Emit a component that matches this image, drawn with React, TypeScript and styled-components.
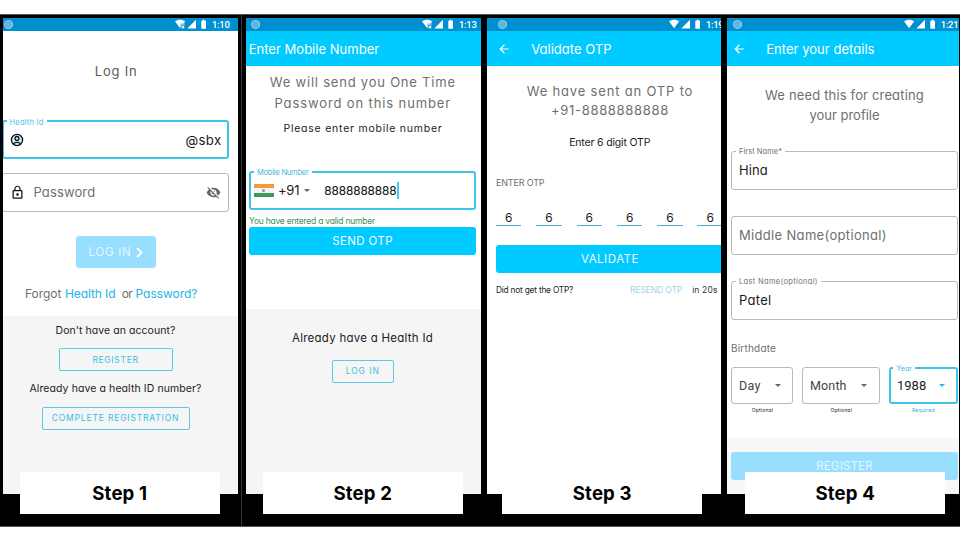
import React from 'react';
import styled, { createGlobalStyle, css } from 'styled-components';
import { MdArrowBack, MdLockOutline, MdVisibilityOff } from 'react-icons/md';

const CYAN = '#00caff';
const LINK = '#22b4e6';
const GREY = '#6f6f6f';
const INK = '#1c1c1c';

const GlobalStyle = createGlobalStyle`
  body { margin: 0; background: #fff; }
  * { box-sizing: border-box; }
`;

const Page = styled.div`
  width: 960px;
  height: 540px;
  padding-top: 14px;
  overflow: hidden;
  background: #fff;
  font-family: Inter, "Open Sans", sans-serif;
  font-feature-settings: "cv11";
`;

const Board = styled.main`
  height: 513px;
  padding-top: 3px;
  border-top: 1px solid #555;
  border-bottom: 1px solid #555;
  background: #000;
  display: grid;
  grid-template-columns: 238px 4px 239px 241px 238px;
`;

const Separator = styled.div`
  margin: -3px 0 0;
  border-right: 1px solid #3a3a3a;
`;

const Phone = styled.section<{ $left: number }>`
  padding-left: ${(p) => p.$left}px;
  min-width: 0;
`;

const Screen = styled.div<{ $width: number }>`
  width: ${(p) => p.$width}px;
  height: 476px;
  overflow: hidden;
  background: #fff;
  display: flex;
  flex-direction: column;
`;

const StepLabel = styled.div<{ $left: number }>`
  position: relative;
  margin: -22px 0 0 ${(p) => p.$left}px;
  width: 200.5px;
  height: 42px;
  padding-bottom: 1px;
  background: #fff;
  color: #000;
  font-size: 18.6px;
  font-weight: 700;
  letter-spacing: 0.15px;
  display: flex;
  align-items: center;
  justify-content: center;
`;

const StatusBar = styled.div<{ $dot: number }>`
  flex: none;
  height: 13px;
  padding-left: ${(p) => p.$dot}px;
  background: #008fcf;
  display: flex;
  align-items: center;
  overflow: hidden;
`;

const StatusDot = styled.span`
  flex: none;
  width: 9px;
  height: 9px;
  border-radius: 50%;
  background: #62b4dc;
  border: 1px solid #86c6e4;
  border-right-color: #b0d8ea;
`;

const StatusRight = styled.div<{ $gap: number }>`
  margin-left: ${(p) => p.$gap}px;
  flex: none;
  display: flex;
  align-items: center;
  gap: 4px;
  color: #fff;
  font: 500 9.5px/13px Roboto, sans-serif;
  letter-spacing: -0.3px;
`;

const AppBar = styled.header<{ $pad: number; $gap?: number }>`
  flex: none;
  height: 35px;
  padding-left: ${(p) => p.$pad}px;
  background: ${CYAN};
  color: #fff;
  display: flex;
  align-items: center;
  gap: ${(p) => p.$gap ?? 0}px;
`;

interface TextProps {
  $size: number;
  $ls?: number;
  $color?: string;
  $roboto?: boolean;
}

const Text = styled.span<TextProps>`
  font-size: ${(p) => p.$size}px;
  letter-spacing: ${(p) => p.$ls ?? 0}px;
  color: ${(p) => p.$color ?? 'inherit'};
  white-space: nowrap;
  ${(p) =>
    p.$roboto &&
    css`
      font-family: Roboto, sans-serif;
    `}
`;

const Line = styled.div<{ $h: number; $top?: number; $left?: number; $center?: number; $gap?: number }>`
  flex: none;
  height: ${(p) => p.$h}px;
  margin-top: ${(p) => p.$top ?? 0}px;
  padding-left: ${(p) => p.$left ?? 0}px;
  display: flex;
  align-items: center;
  gap: ${(p) => p.$gap ?? 0}px;
  ${(p) =>
    p.$center !== undefined &&
    css`
      width: ${p.$center * 2}px;
      justify-content: center;
    `}
`;

const Field = styled.div<{ $top: number; $left: number; $width: number; $height?: number; $active?: boolean }>`
  position: relative;
  flex: none;
  width: ${(p) => p.$width}px;
  height: ${(p) => p.$height ?? 39}px;
  margin: ${(p) => p.$top}px 0 0 ${(p) => p.$left}px;
  border: ${(p) => (p.$active ? '2px solid #3fc3ea' : '1px solid #b9b9b9')};
  border-radius: 3px;
  display: flex;
  align-items: center;
  padding: ${(p) => (p.$active ? '0 5.5px 0 6px' : '0 7px')};
  color: ${INK};
`;

const FieldLabel = styled.span<{ $ls: number; $color: string; $size?: number; $left?: number }>`
  position: absolute;
  top: -5.5px;
  left: ${(p) => p.$left ?? 4}px;
  padding: 0 3px;
  background: #fff;
  color: ${(p) => p.$color};
  font-size: ${(p) => p.$size ?? 7.5}px;
  line-height: 11px;
  letter-spacing: ${(p) => p.$ls}px;
  white-space: nowrap;
`;

const Push = styled.span<{ $right?: number }>`
  margin-left: auto;
  margin-right: ${(p) => p.$right ?? 0}px;
  display: flex;
  align-items: center;
`;

const Button = styled.button<{ $w: number; $h: number; $top: number; $left: number; $kind?: 'fill' | 'pale' | 'outline' }>`
  flex: none;
  width: ${(p) => p.$w}px;
  height: ${(p) => p.$h}px;
  margin: ${(p) => p.$top}px 0 0 ${(p) => p.$left}px;
  padding: 0;
  border-radius: 3px;
  font-family: inherit;
  font-feature-settings: inherit;
  display: flex;
  align-items: center;
  justify-content: center;
  gap: 4px;
  ${(p) =>
    p.$kind === 'outline'
      ? css`
          border: 1px solid #5bc8e6;
          border-radius: 2px;
          background: transparent;
          color: #35bfe4;
        `
      : css`
          border: 0;
          background: ${p.$kind === 'pale' ? '#97deff' : CYAN};
          color: ${p.$kind === 'pale' ? '#e4f6ff' : '#f2fcff'};
        `}
`;

const Panel = styled.div<{ $top: number; $tint?: string }>`
  flex: 1;
  margin-top: ${(p) => p.$top}px;
  background: ${(p) => p.$tint ?? '#f5f5f5'};
  display: flex;
  flex-direction: column;
  color: ${INK};
`;

const Caret = styled.span<{ $color?: string }>`
  border: 3px solid transparent;
  border-top-color: ${(p) => p.$color ?? '#666'};
  border-bottom: 0;
`;

const Flag = styled.span`
  width: 19.5px;
  height: 13px;
  margin-left: -3px;
  background: linear-gradient(#f2993f 0 4.3px, #f4f4f4 4.3px 8.7px, #3d9a5c 8.7px);
  display: flex;
  align-items: center;
  justify-content: center;
  &::after {
    content: '';
    width: 3px;
    height: 3px;
    border-radius: 50%;
    background: #8d9aa8;
  }
`;

const Cursor = styled.span`
  width: 2px;
  height: 17px;
  background: #4cc4ea;
`;

const Digits = styled.div`
  flex: none;
  margin: 18.5px 0 0 9.3px;
  display: grid;
  grid-template-columns: repeat(6, 25.5px);
  column-gap: 14.8px;
`;

const Digit = styled.div`
  height: 18px;
  border-bottom: 1px solid #55a9d6;
  display: flex;
  justify-content: center;
  color: ${INK};
  font-size: 12px;
  line-height: 19px;
`;

const Dates = styled.div`
  flex: none;
  display: flex;
  margin-top: 11px;
`;

const DateColumn = styled.div`
  display: flex;
  flex-direction: column;
`;

const Hint = styled.span<{ $left: number; $color?: string }>`
  margin: 2px 0 0 ${(p) => p.$left}px;
  font-size: 5px;
  line-height: 9px;
  letter-spacing: 0.2px;
  color: ${(p) => p.$color ?? '#222'};
`;

function StatusIcons({ weak }: { weak?: boolean }) {
  return (
    <svg width="33" height="11" viewBox="0 0 33 11" fill="#fff">
      <path d="M0 2.3C3 .2 7.3.2 10.2 2.3L5.1 9.3z" />
      {weak && <path d="M5.6 4.4h5.4V10H5.6z" fill="#008fcf" />}
      {weak && <path d="M5.6 4.4h4v1.2h-4zM6.9 6.3l1 1 1-1 .7.7-1 1 1 1-.7.7-1-1-1 1-.7-.7 1-1-1-1z" />}
      <path d="M12.3 9.4 21 .8v8.6zM26.3 1.7h1.3V.7h2v1H31v8h-4.7z" />
    </svg>
  );
}

function PersonIcon() {
  return (
    <svg width="14" height="14" viewBox="0 0 14 14" fill="none" stroke="#111" strokeWidth="1.3">
      <circle cx="7" cy="7" r="5.6" fill="#c9ecf8" />
      <circle cx="7" cy="5.4" r="1.9" />
      <path d="M3.2 11c1.6-2.2 6-2.2 7.6 0" />
    </svg>
  );
}

function Status({ time, dot, gap, weak }: { time: string; dot: number; gap: number; weak?: boolean }) {
  return (
    <StatusBar $dot={dot}>
      <StatusDot />
      <StatusRight $gap={gap}>
        <StatusIcons weak={weak} />
        {time}
      </StatusRight>
    </StatusBar>
  );
}

function LoginPhone() {
  return (
    <Phone $left={2.5}>
      <Screen $width={235}>
        <Status time="1:10" dot={1} gap={162.5} weak />
        <Line $h={20} $top={30} $center={113.6}>
          <Text $size={13} $ls={0.75} $color="#5c5c5c">Log In</Text>
        </Line>
        <Field $top={39} $left={-1} $width={227.5} $active>
          <FieldLabel $ls={0.22} $color="#45bfe2" $left={3}>Health Id</FieldLabel>
          <Line $h={16}><PersonIcon /></Line>
          <Push><Text $size={13.2} $ls={0.35}>@sbx</Text></Push>
        </Field>
        <Field $top={13.5} $left={-1} $width={227.5}>
          <MdLockOutline size={15} color="#111" />
          <Line $h={20} $left={9}><Text $size={13} $ls={0.12} $color={GREY}>Password</Text></Line>
          <Push><MdVisibilityOff size={15} color="#666" /></Push>
        </Field>
        <Button $kind="pale" $w={80} $h={32} $top={24.5} $left={73}>
          <Text $size={11.5} $ls={0.75}>LOG IN</Text>
          <svg width="7" height="11" viewBox="0 0 7 11" fill="none" stroke="#fff" strokeWidth="2">
            <path d="M1 1l4.5 4.5L1 10" />
          </svg>
        </Button>
        <Line $h={20} $top={15} $left={22.4} $gap={3.4}>
          <Text $size={12} $ls={0} $color={GREY}>Forgot</Text>
          <Text $size={12} $ls={-0.08} $color={LINK}>Health Id</Text>
          <Text $size={12} $ls={-0.6} $color={GREY}>&nbsp;or</Text>
          <Text $size={12} $ls={-0.05} $color={LINK}>Password?</Text>
        </Line>
        <Panel $top={13}>
          <Line $h={14} $top={7} $center={113}><Text $size={10.5} $ls={0.06}>Don't have an account?</Text></Line>
          <Button $kind="outline" $w={114} $h={23} $top={11} $left={56}><Text $size={8.5} $ls={0.68}>REGISTER</Text></Button>
          <Line $h={14} $top={10.5} $center={113}><Text $size={10.5} $ls={0.09}>Already have a health ID number?</Text></Line>
          <Button $kind="outline" $w={148} $h={23} $top={11} $left={39}><Text $size={8.5} $ls={0.83}>COMPLETE REGISTRATION</Text></Button>
        </Panel>
      </Screen>
      <StepLabel $left={17}>Step 1</StepLabel>
    </Phone>
  );
}

function MobilePhone() {
  return (
    <Phone $left={3.5}>
      <Screen $width={235}>
        <Status time="1:13" dot={5.5} gap={162} weak />
        <AppBar $pad={3.2}><Text $size={13} $ls={0.02}>Enter Mobile Number</Text></AppBar>
        <Line $h={20} $top={6.2} $center={117.3}><Text $size={13} $ls={0.78} $color={GREY}>We will send you One Time</Text></Line>
        <Line $h={20} $top={0.4} $center={117.3}><Text $size={13} $ls={0.88} $color={GREY}>Password on this number</Text></Line>
        <Line $h={16} $top={7.9} $center={117.5}><Text $size={10.5} $ls={0.76} $color={INK}>Please enter mobile number</Text></Line>
        <Field $top={34.5} $left={3.5} $width={227} $active>
          <FieldLabel $ls={-0.22} $color="#45b6de" $left={3}>Mobile Number</FieldLabel>
          <Line $h={20} $gap={4.5}>
            <Flag />
            <Text $size={13} $ls={-0.25}>+91</Text>
            <Caret />
          </Line>
          <Line $h={20} $left={14.5} $top={1}>
            <Text $size={13} $ls={-0.07} $roboto>8888888888</Text>
            <Cursor />
          </Line>
        </Field>
        <Line $h={12} $top={5.5} $left={3.5}><Text $size={8.5} $ls={-0.23} $color="#3d8f57">You have entered a valid number</Text></Line>
        <Button $w={227} $h={28} $top={-0.5} $left={3.5}><Text $size={11.5} $ls={0.38}>SEND OTP</Text></Button>
        <Panel $top={54}>
          <Line $h={16} $top={21} $center={117}><Text $size={11.5} $ls={0.26}>Already have a Health Id</Text></Line>
          <Button $kind="outline" $w={61.5} $h={23} $top={14} $left={86.5}><Text $size={8.5} $ls={0.95}>LOG IN</Text></Button>
        </Panel>
      </Screen>
      <StepLabel $left={17}>Step 2</StepLabel>
    </Phone>
  );
}

function ValidatePhone() {
  return (
    <Phone $left={5.7}>
      <Screen $width={234.8}>
        <Status time="1:19" dot={11.3} gap={161.9} />
        <AppBar $pad={10} $gap={20.5}><MdArrowBack size={14} /><Text $size={13} $ls={0.02}>Validate OTP</Text></AppBar>
        <Line $h={18} $top={16} $center={123.3}><Text $size={13} $ls={0.82} $color={GREY}>We have sent an OTP to</Text></Line>
        <Line $h={18} $top={0.8} $center={123.3}><Text $size={13} $ls={0.68} $color={GREY}>+91-8888888888</Text></Line>
        <Line $h={16} $top={15.7} $center={123}><Text $size={10.5} $ls={-0.17} $color={INK}>Enter 6 digit OTP</Text></Line>
        <Line $h={14} $top={25} $left={9.3}><Text $size={9} $ls={-0.17} $color={GREY}>ENTER OTP</Text></Line>
        <Digits>{[0, 1, 2, 3, 4, 5].map((i) => <Digit key={i}>6</Digit>)}</Digits>
        <Button $w={228} $h={28} $top={19.2} $left={9.3}><Text $size={11.5} $ls={0.51}>VALIDATE</Text></Button>
        <Line $h={14} $top={9.8} $left={9.3}>
          <Text $size={8.3} $ls={-0.2} $color={INK}>Did not get the OTP?</Text>
          <Line $h={14} $left={57} $gap={10}>
            <Text $size={8.5} $ls={-0.12} $color="#9ed3ec">RESEND OTP</Text>
            <Text $size={8.5} $ls={0.15} $color="#333">in 20s</Text>
          </Line>
        </Line>
      </Screen>
      <StepLabel $left={15.3}>Step 3</StepLabel>
    </Phone>
  );
}

function DetailsPhone() {
  return (
    <Phone $left={4.7}>
      <Screen $width={232}>
        <Status time="1:21" dot={6.3} gap={161.8} />
        <AppBar $pad={5} $gap={20.5}><MdArrowBack size={14} /><Text $size={13} $ls={0.04}>Enter your details</Text></AppBar>
        <Line $h={20} $top={18.8} $center={117.8}><Text $size={13} $ls={0.16} $color={GREY}>We need this for creating</Text></Line>
        <Line $h={20} $top={0.7} $center={117.8}><Text $size={13} $color={GREY}>your profile</Text></Line>
        <Field $top={25.5} $left={4.3} $width={227}>
          <FieldLabel $ls={0.05} $color={GREY}>First Name*</FieldLabel>
          <Line $h={20}><Text $size={13} $ls={0.1}>Hina</Text></Line>
        </Field>
        <Field $top={26} $left={4.3} $width={227}>
          <Line $h={20} $top={-1}><Text $size={13} $ls={0.33} $color={GREY}>Middle Name(optional)</Text></Line>
        </Field>
        <Field $top={26} $left={4.3} $width={227}>
          <FieldLabel $ls={0.33} $color={GREY}>Last Name(optional)</FieldLabel>
          <Line $h={20} $top={-1}><Text $size={13} $ls={0.3}>Patel</Text></Line>
        </Field>
        <Line $h={16} $top={20} $left={4.3}><Text $size={10} $ls={0.2} $color={GREY}>Birthdate</Text></Line>
        <Dates>
          <DateColumn>
            <Field $top={0} $left={4.3} $width={62} $height={37}>
              <Text $size={12.5} $ls={0.3} $roboto $color="#444">Day</Text>
              <Push $right={4}><Caret /></Push>
            </Field>
            <Hint $left={25}>Optional</Hint>
          </DateColumn>
          <DateColumn>
            <Field $top={0} $left={9} $width={78} $height={37}>
              <Text $size={12.5} $ls={0.15} $roboto $color="#444">Month</Text>
              <Push $right={4.5}><Caret /></Push>
            </Field>
            <Hint $left={37.5}>Optional</Hint>
          </DateColumn>
          <DateColumn>
            <Field $top={0} $left={9} $width={69.5} $height={37} $active>
              <FieldLabel $ls={0.1} $size={7} $color="#35bbe2" $left={2.5}>Year</FieldLabel>
              <Text $size={13} $ls={0} $roboto>1988</Text>
              <Push $right={5.5}><Caret $color="#22b8e6" /></Push>
            </Field>
            <Hint $color={LINK} $left={32}>Required</Hint>
          </DateColumn>
        </Dates>
        <Panel $top={23} $tint="#f8f8f8">
          <Button $kind="pale" $w={227} $h={28} $top={14} $left={4.3}><Text $size={11.5} $ls={0.19}>REGISTER</Text></Button>
        </Panel>
      </Screen>
      <StepLabel $left={18.3}>Step 4</StepLabel>
    </Phone>
  );
}

export default function App() {
  return (
    <Page>
      <GlobalStyle />
      <Board>
        <LoginPhone />
        <Separator />
        <MobilePhone />
        <ValidatePhone />
        <DetailsPhone />
      </Board>
    </Page>
  );
}
